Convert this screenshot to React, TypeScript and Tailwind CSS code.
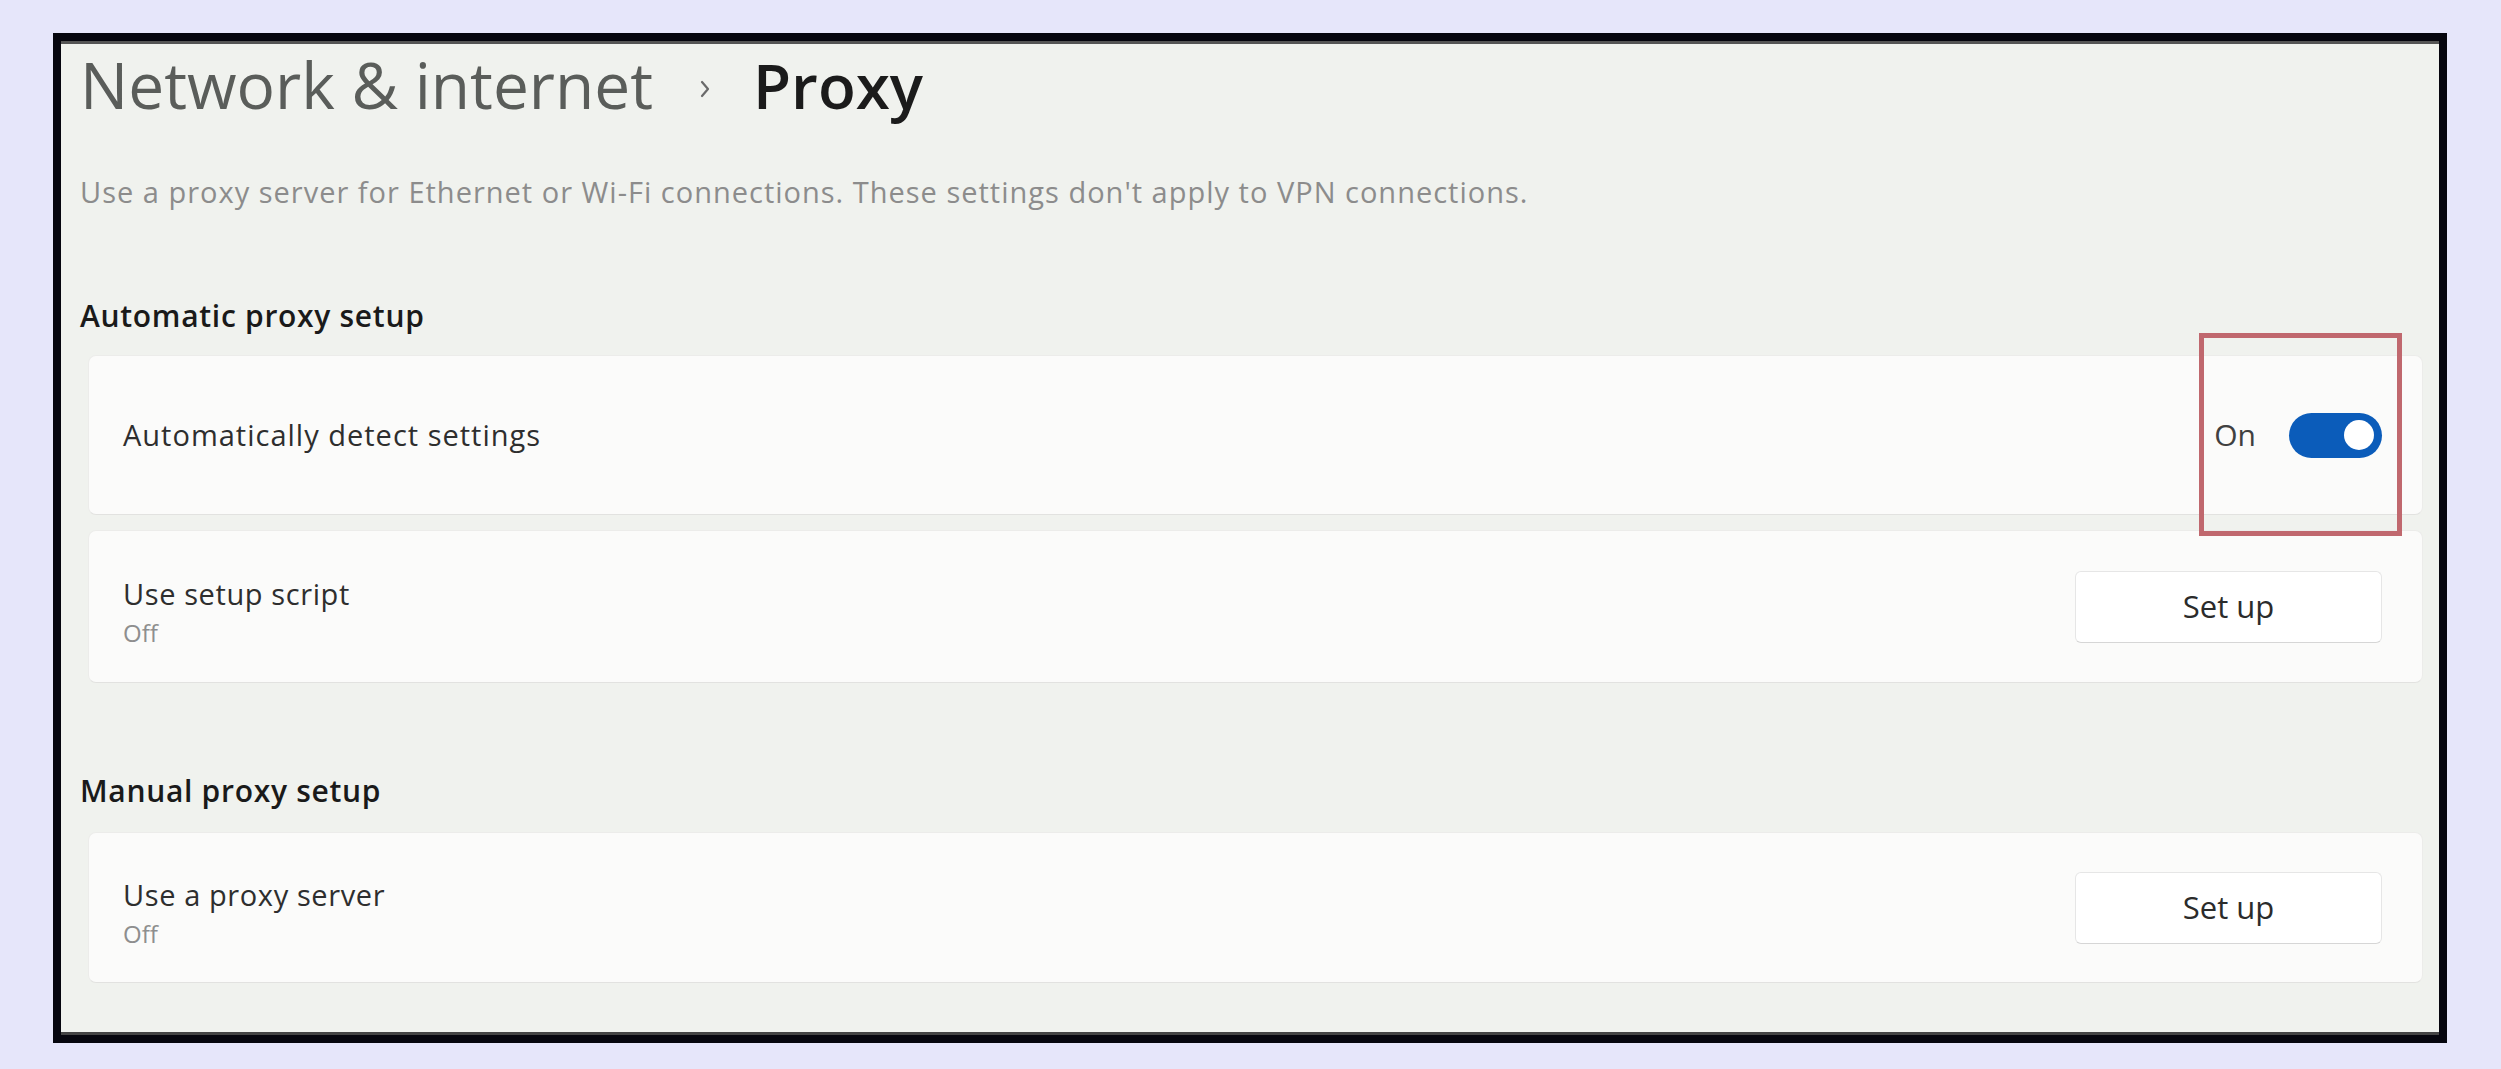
import React from "react";

const FONT = "font-['Open_Sans','Noto_Sans',sans-serif]";

interface RowProps {
  title: string;
  subtitle?: string;
  children: React.ReactNode;
  className?: string;
}

function SettingRow({ title, subtitle, children, className = "" }: RowProps) {
  return (
    <div
      className={`relative flex items-center justify-between rounded-[8px] border border-[#ececea] border-b-[#e2e2e0] bg-[#fbfbfa] pl-[34px] pr-[40px] ${className}`}
    >
      {subtitle ? (
        <div className="flex flex-col pt-[11px]">
          <span className="text-[29px] leading-[34px] tracking-[0.6px] text-[#2e2e2e]">{title}</span>
          <span className="mt-[8px] text-[24px] leading-[28px] text-[#8e8e8e]">{subtitle}</span>
        </div>
      ) : (
        <span className="text-[29px] leading-[34px] tracking-[1px] text-[#2e2e2e]">{title}</span>
      )}
      {children}
    </div>
  );
}

function SetUpButton() {
  return (
    <button
      type="button"
      className="flex h-[72px] w-[307px] items-center justify-center rounded-[6px] border border-[#e6e6e6] border-b-[#d6d6d6] bg-white text-[31px] text-[#2b2b2b]"
    >
      Set up
    </button>
  );
}

function Toggle() {
  return (
    <div className="flex items-center">
      <span className="text-[30px] leading-[30px] text-[#404040]">On</span>
      <div className="ml-[33px] flex h-[45px] w-[93px] items-center justify-end rounded-full bg-[#0b5cba] pr-[8px]">
        <div className="h-[30px] w-[30px] rounded-full bg-white" />
      </div>
    </div>
  );
}

export default function App() {
  return (
    <div className={`min-h-screen w-full bg-[#e6e6fa] pl-[53px] pr-[54px] pt-[33px] ${FONT}`}>
      <div className="flex h-[1010px] flex-col border-[8px] border-[#06060e] bg-[#f0f2ee] pl-[19px] pr-[16px] shadow-[inset_0_3px_0_#555555,inset_0_-3px_0_#444444]">
        {/* Breadcrumb title */}
        <div className="mt-[12px] flex items-center text-[64px] leading-[64px]">
          <span className="text-[#5a5d5a]">Network &amp; internet</span>
          <svg width="12" height="18" viewBox="0 0 12 18" className="ml-[46px] mt-[8px]">
            <path d="M3 2 L9 9 L3 16" fill="none" stroke="#6a6a6a" strokeWidth="2.2" strokeLinecap="round" strokeLinejoin="round" />
          </svg>
          <span className="ml-[42px] text-[62px] font-semibold text-[#1b1b1b]">Proxy</span>
        </div>

        <p className="mt-[61px] text-[29px] leading-[28px] tracking-[1px] text-[#8c8c8c]">
          Use a proxy server for Ethernet or Wi-Fi connections. These settings don&apos;t apply to VPN connections.
        </p>

        <h2 className="mt-[95px] text-[30px] font-semibold leading-[29px] tracking-[0.7px] text-[#1a1a1a]">
          Automatic proxy setup
        </h2>

        <SettingRow title="Automatically detect settings" className="ml-[8px] mt-[25px] h-[160px]">
          <Toggle />
          {/* highlight annotation */}
          <div className="pointer-events-none absolute bottom-[-22px] right-[20px] top-[-23px] z-10 w-[203px] border-[5px] border-[#c0686e]" />
        </SettingRow>

        <SettingRow title="Use setup script" subtitle="Off" className="ml-[8px] mt-[15px] h-[153px]">
          <SetUpButton />
        </SettingRow>

        <h2 className="mt-[93px] text-[30px] font-semibold leading-[29px] tracking-[0.7px] text-[#1a1a1a]">
          Manual proxy setup
        </h2>

        <SettingRow title="Use a proxy server" subtitle="Off" className="ml-[8px] mt-[27px] h-[151px]">
          <SetUpButton />
        </SettingRow>
      </div>
    </div>
  );
}
